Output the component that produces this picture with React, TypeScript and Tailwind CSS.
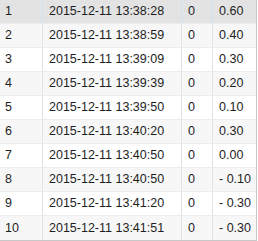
const rows = [
  ['1', '2015-12-11 13:38:28', '0', '0.60'],
  ['2', '2015-12-11 13:38:59', '0', '0.40'],
  ['3', '2015-12-11 13:39:09', '0', '0.30'],
  ['4', '2015-12-11 13:39:39', '0', '0.20'],
  ['5', '2015-12-11 13:39:50', '0', '0.10'],
  ['6', '2015-12-11 13:40:20', '0', '0.30'],
  ['7', '2015-12-11 13:40:50', '0', '0.00'],
  ['8', '2015-12-11 13:40:50', '0', '- 0.10'],
  ['9', '2015-12-11 13:41:20', '0', '- 0.30'],
  ['10', '2015-12-11 13:41:51', '0', '- 0.30'],
];

export default function App() {
  return (
    <div className="w-[258px] h-[241px] bg-white overflow-hidden" style={{ fontFamily: '"Liberation Sans", Arial, sans-serif' }}>
      <div className="w-[257px] border-r border-b border-[#c8c8c8]">
        {rows.map((r, i) => {
          const selected = i === 0;
          const bg = selected ? 'bg-[#e3e3e3]' : i % 2 === 1 ? 'bg-[#f7f7f7]' : 'bg-white';
          const line = selected ? 'border-[#cfe3f3]' : 'border-[#e2e2e2]';
          return (
            <div key={r[0]} className={`flex h-6 text-[12.5px] text-[#1e1e1e] border-b border-[#ececec] last:border-b-0 ${bg}`}>
              <div className={`w-[43px] pl-[5px] flex items-center border-r ${line}`}>{r[0]}</div>
              <div className={`w-[139px] pl-[6px] flex items-center border-r ${line}`}>{r[1]}</div>
              <div className={`w-[31px] pl-[6px] flex items-center border-r ${line}`}>{r[2]}</div>
              <div className="flex-1 pl-[6px] flex items-center">{r[3]}</div>
            </div>
          );
        })}
      </div>
    </div>
  );
}
